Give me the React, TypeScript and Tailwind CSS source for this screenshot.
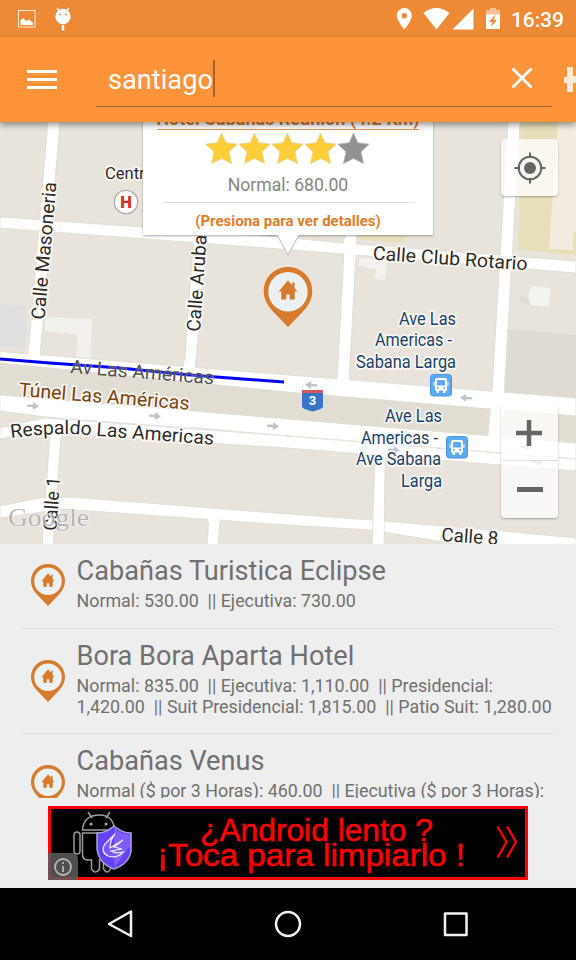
import React from "react";

function Pin({ className }: { className: string }) {
  return (
    <svg viewBox="0 0 34 42" className={className}>
      <path d="M17 0C7.500 0 0 7.500 0 16.800c0 6.200 3.300 11 7.200 15L17 42l9.800-10.200c3.900-4 7.200-8.800 7.200-15C34 7.500 26.500 0 17 0Z" fill="#d67a2c" />
      <circle cx="17" cy="17.300" r="13.800" fill="#ecf0f1" />
      <path d="M17 9.300 10.500 17.200h1.800v5.600h3.500v-3.600h2.400v3.600h3.500v-5.600h1.800L21.600 14.700v-3.900h-1.700v1.900Z" fill="#d67a2c" />
    </svg>
  );
}

type LabelProps = { x: number; y: number; w: number; a?: number; size?: number; fill?: string; children: string };

function Label({ x, y, w, a = 0, size = 19, fill = "#302a25", children }: LabelProps) {
  return (
    <text x={x} y={y} transform={`rotate(${a} ${x} ${y})`} fontSize={size} fill={fill} textLength={w}
      lengthAdjust="spacingAndGlyphs" stroke="#fff" strokeOpacity=".75" strokeWidth="3.500" strokeLinejoin="round" paintOrder="stroke">
      {children}
    </text>
  );
}

function Arrow({ x, y, left }: { x: number; y: number; left?: boolean }) {
  return (
    <path d="M-6-1.200H0V-4L6 0 0 4V1.200H-6Z" fill="#bdc3cb"
      transform={`translate(${x} ${y}) rotate(${left ? 184 : 4})`} />
  );
}

function Bus({ x, y }: { x: number; y: number }) {
  return (
    <g transform={`translate(${x} ${y})`}>
      <rect x=".5" y=".5" width="21" height="21.500" rx="3" fill="#5aabf3" stroke="#4795dc" />
      <path d="M7 4h8q2 0 2 2v10.500h-1.500V19H13v-2.500H9V19H6.500v-2.500H5V6q0-2 2-2Z" fill="#fff" />
      <path d="M7.300 6h7.400l.6 5.500H6.700Z" fill="#5aabf3" />
      <circle cx="7.800" cy="14" r="1" fill="#5aabf3" /><circle cx="14.200" cy="14" r="1" fill="#5aabf3" />
      <path d="M4 8v4M18 8v4" stroke="#fff" />
    </g>
  );
}

function StreetMap() {
  const navy = "#1d4166";
  return (
    <svg viewBox="0 122 576 422" className="block h-[422px] w-[576px]">
      <rect y="122" width="576" height="422" fill="#e8e4dc" />
      <path d="M0 304 27 305 25 348 0 346Z" fill="#dfdfe0" />
      <path d="M45 317 92 319 91 358 76 357 78 335 45 331Z" fill="#f2f1ed" />
      <path d="M521 122H576V255L518 250Z" fill="#e7deba" />
      <path d="M558 122H576V231L573 234V250L549 249Z" fill="#f2ede0" />
      <path d="M358 234H404V243L360 240Z" fill="#e7deba" />
      <path d="M359 258 387 260 385 280 375 279 376 269 359 266Z" fill="#f3f2ee" />
      <path d="M520 296 531 298 531 306 520 302Z" fill="#dfdbd4" />
      <path d="M531 286 551 288 549 307 530 305 528 296Z" fill="#f4f3f0" />
      <path d="M509 329 576 335V398L505 393Z" fill="#dfdad3" />
      <path d="M0 362 288 391 490 408 488 436 288 420 0 396Z" fill="#e2ddd3" />
      <path d="M503 409 576 415V443L500 437Z" fill="#e2ddd3" />
      <g stroke="#dcd8d0" strokeWidth=".7" fill="#fff">
        <path d="M48 122H60L40 356H28Z" />
        <path d="M194 236H207L195 370H184Z" />
        <path d="M345 234H357L349 382H337Z" />
        <path d="M508 122H520L504 395 500 440H488L492 391Z" />
        <path d="M0 217 280 237 343 243 576 261V273L343 254 280 249 0 228Z" />
        <path d="M0 351.500 288 375 576 398V416L490 409 288 392 0 363Z" />
        <path d="M0 395 288 419 576 443V460L288 436 46 417 0 411Z" />
        <path d="M0 428 30 421 46 418 288 436 576 459V471L288 448 62 434 28 433 0 439Z" />
        <path d="M50 434H61L53 546H42Z" />
        <path d="M0 506 40 498 70 497 288 514 371 520 490 530 576 538V548H480L371 530 288 525 62 509 0 518Z" />
        <path d="M209 517H220L218 546H207Z" />
        <path d="M375 459H385L384 546H372Z" />
      </g>
      <g fill="#fff">
        <path d="M29 345H40V359H28ZM184 361H195V374H184ZM338 373H349V386H337ZM493 386 504 387 501 440 488 440Z" />
        <path d="M46 218H51L50 231H43ZM344 239H356V255H344ZM501 251H512V266H501Z" />
        <path d="M51 424H61V438H50ZM46 495H56V512H45ZM209 509H220V522H208ZM375 452H385V463H375ZM374 518H384V533H373Z" />
      </g>
      <path d="M190 427 288 436 576 459" stroke="#e9e6de" strokeWidth="1" fill="none" />
      <Arrow x={33} y={406} /><Arrow x={155} y={416} /><Arrow x={273} y={426} />
      <Arrow x={311} y={385} left /><Arrow x={466} y={398} left />
      <Arrow x={394} y={450} /><Arrow x={526} y={447} /><Arrow x={537} y={462} />
      <g fontFamily="Roboto, sans-serif">
        <Label x={44.500} y={320} w={138} a={-85}>Calle Masoneria</Label>
        <Label x={200} y={332} w={97} a={-86}>Calle Aruba</Label>
        <Label x={372.500} y={259.500} w={155} a={4}>Calle Club Rotario</Label>
        <path d="M0 359 50 363 120 368 190 375 284 382" fill="none" stroke="#0000ff" strokeWidth="3" />
        <text x="70" y="373" transform="rotate(4.500 70 373)" fontSize="19" fill="#55524c" textLength="144" lengthAdjust="spacingAndGlyphs" stroke="#fff" strokeOpacity=".25" strokeWidth="2" paintOrder="stroke">Av Las Américas</text>
        <Label x={18.500} y={396} w={171} a={4.600} fill="#7c430c">Túnel Las Américas</Label>
        <path id="respaldo" d="M11 438Q42 434 72 434L216 445" fill="none" />
        <text fontSize="19" fill="#302a25" stroke="#fff" strokeOpacity=".75" strokeWidth="3.500" paintOrder="stroke"><textPath href="#respaldo" textLength="203" lengthAdjust="spacingAndGlyphs">Respaldo Las Americas</textPath></text>
        <Label x={56.500} y={531} w={54} a={-86}>Calle 1</Label>
        <Label x={441} y={541} w={57} a={4}>Calle 8</Label>
        <Label x={105} y={179} w={49} size={17}>Centro</Label>
        <Label x={399} y={324.500} w={57} size={17.500} fill={navy}>Ave Las</Label>
        <Label x={375} y={346} w={77} size={17.500} fill={navy}>Americas -</Label>
        <Label x={356} y={367.500} w={100} size={17.500} fill={navy}>Sabana Larga</Label>
        <Label x={385} y={422} w={57} size={17.500} fill={navy}>Ave Las</Label>
        <Label x={361} y={443.500} w={77} size={17.500} fill={navy}>Americas -</Label>
        <Label x={356} y={465} w={85} size={17.500} fill={navy}>Ave Sabana</Label>
        <Label x={401} y={486.500} w={41} size={17.500} fill={navy}>Larga</Label>
        <circle cx="126" cy="202" r="11.700" fill="#fff" stroke="#aaa" strokeWidth="1.300" />
        <text x="126" y="208" textAnchor="middle" fontSize="16.500" fontWeight="900" fill="#d93025">H</text>
        <path d="M302 397H323V407Q322 409 312.500 411.500 303 409 302 407Z" fill="#3674c6" />
        <path d="M302 390H323V393.500H302Z" fill="#d85656" />
        <path d="M302 393H323V399H302Z" fill="#3674c6" />
        <text x="312.500" y="405" textAnchor="middle" fontSize="13" fontWeight="700" fill="#fff">3</text>
      </g>
      <Bus x={430} y={374} /><Bus x={446} y={436} />
      <text x="8" y="525.500" fontFamily="'Liberation Serif', serif" fontSize="25" textLength="81" lengthAdjust="spacingAndGlyphs" fill="#8d8d8d" fillOpacity=".6" stroke="#fff" strokeOpacity=".6" strokeWidth="1.500" paintOrder="stroke">Google</text>
    </svg>
  );
}

function Star({ on }: { on: boolean }) {
  return (
    <svg viewBox="0 0 33 33" className="h-[33px] w-[33px]">
      <path d="M16.500 1 20.800 10.700 32.200 12.200 24 19.800 26.500 31.500 16.500 26.500 6.500 31.500 9 19.800 .8 12.200 12.200 10.700Z" fill={on ? "#ffcd37" : "#929292"} stroke={on ? "#e8d089" : "#b5b5b5"} strokeWidth=".8" />
    </svg>
  );
}

function InfoWindow() {
  return (
    <div className="absolute top-[-24px] left-[143px] h-[137px] w-[290px] bg-white shadow-[0_1px_2px_rgba(0,0,0,0.35)]">
      <div className="flex flex-col items-center pt-[10px]">
        <div className="flex h-[22px] w-[262px] justify-center border-b border-[#ed954e] text-[18px] leading-[22px] font-bold whitespace-nowrap text-[#d6782c]">Hotel Cabañas Reunión (4.2 Km)</div>
        <div className="mt-[2px] mr-[2px] flex h-[33px]">{[1, 1, 1, 1, 0].map((n, i) => <Star key={i} on={n === 1} />)}</div>
        <div className="mt-[9px] text-[17.600px] leading-[22px] text-[#858585]">Normal: 680.00</div>
        <div className="mt-[6px] h-px w-[251px] bg-[#dedede]" />
        <div className="mt-[8px] text-[15px] leading-[20px] font-bold whitespace-nowrap text-[#df7d2a]">(Presiona para ver detalles)</div>
      </div>
      <svg viewBox="0 0 24 22" className="absolute top-[136px] left-[133px] h-[22px] w-[24px]">
        <path d="M1 0 12 21 23 0Z" fill="#fff" /><path d="M1 1 12 21 23 1" fill="none" stroke="#bbb" />
      </svg>
    </div>
  );
}

function MapControls() {
  return (
    <>
      <div className="absolute top-[17px] left-[501px] flex h-[57px] w-[57px] items-center justify-center rounded-sm bg-white/75 shadow-[0_1px_2px_rgba(0,0,0,0.3)]">
        <svg viewBox="0 0 32 32" className="h-8 w-8" fill="none" stroke="#666" strokeWidth="2"><circle cx="16" cy="16" r="11.300" /><circle cx="16" cy="16" r="6" fill="#666" stroke="none" /><path d="M16 .5V6M16 26v5.500M.5 16H6M26 16h5.500" /></svg>
      </div>
      <div className="absolute top-[282px] left-[501px] flex h-[114px] w-[57px] flex-col rounded-sm bg-white/75 shadow-[0_1px_2px_rgba(0,0,0,0.3)]">
        <div className="flex h-[57px] items-center justify-center border-b border-[#deddda] pr-[2px] pt-[2px]"><svg viewBox="0 0 26 26" className="h-[26px] w-[26px]"><path d="M13 0V26M0 13H26" stroke="#666" strokeWidth="4.500" /></svg></div>
        <div className="flex h-[57px] items-center justify-center"><div className="h-[5px] w-[26px] bg-[#666]" /></div>
      </div>
    </>
  );
}

function StatusBar() {
  return (
    <div className="flex h-[37px] shrink-0 items-center bg-[#ee8a36]">
      <svg viewBox="0 0 80 37" className="h-[37px] w-[80px]">
        <rect x="18.500" y="10.500" width="16.500" height="16.500" fill="none" stroke="#fff" strokeOpacity=".85" />
        <path d="M20.500 25V20.500L23 18l3 3 3-1.500L33 23v2Z" fill="#fff" />
        <circle cx="63" cy="16.500" r="7.700" fill="#fff" />
        <path d="m57 8 3 4M69 8l-3 4" stroke="#fff" strokeWidth="1.300" />
        <path d="M63 25v5.500" stroke="#fff" strokeWidth="2.500" />
        <circle cx="60" cy="14.500" r="1" fill="#ee8a36" /><circle cx="66" cy="14.500" r="1" fill="#ee8a36" />
      </svg>
      <svg viewBox="390 0 112 37" className="ml-[310px] h-[37px] w-[112px]">
        <path d="M404.300 8a7.500 7.500 0 0 0-7.500 7.500c0 5.500 7.500 14 7.500 14s7.500-8.500 7.500-14a7.500 7.500 0 0 0-7.500-7.500Zm0 5a2.700 2.700 0 1 1 0 5.400 2.700 2.700 0 0 1 0-5.400Z" fill="#fff" />
        <path d="M423.500 13Q436.500 3 449.500 13L436.500 29.500Z" fill="#fff" />
        <path d="M473.500 8.500V29.500H452.500Z" fill="#fff" />
        <path d="M490 8h6v2h4v5h-14v-5h4Z" fill="#f7c095" /><path d="M486 14.500h14V29h-14Z" fill="#fff" />
        <path d="m495 15-6 7h3.500l-1.500 5 6-7h-3.500l2-5Z" fill="#ee8a36" />
      </svg>
      <span className="ml-[9px] pt-[3px] text-[21px] leading-none font-medium tracking-[-0.100px] text-white">16:39</span>
    </div>
  );
}

function SearchBar() {
  return (
    <header className="relative z-10 flex h-[85px] shrink-0 bg-[#ff933a] shadow-[0_3px_6px_rgba(0,0,0,0.4)]">
      <div className="flex w-[96px] flex-col gap-[5px] pt-[33px] pl-[27px]">
        <i className="h-[3px] w-[30px] bg-white" /><i className="h-[3px] w-[30px] bg-white" /><i className="h-[3px] w-[30px] bg-white" />
      </div>
      <div className="flex h-[70px] w-[456px] items-center border-b border-[#a56737] pt-[13px] pl-[12px]">
        <span className="pt-[4px] text-[27.200px] leading-8 text-white">santiago</span>
        <i className="h-[37px] w-[2px] bg-[#a7622b]" />
        <svg viewBox="0 0 22 22" className="mr-[19px] ml-auto h-[22px] w-[22px]"><path d="m1.500 1.500 19 19m0-19-19 19" stroke="#fff" strokeWidth="2.800" /></svg>
      </div>
      <svg viewBox="0 0 12 85" className="ml-[12px] h-[85px] w-[12px]"><path d="M3 30H9V39H12V46H9V55H3V46H0V40H3Z" fill="#ffe9d8" /></svg>
    </header>
  );
}

const places = [
  { name: "Cabañas Turistica Eclipse", lines: ["Normal: 530.00  || Ejecutiva: 730.00"], pt: "pt-[20px]", h: "h-[85px]" },
  { name: "Bora Bora Aparta Hotel", lines: ["Normal: 835.00  || Ejecutiva: 1,110.00  || Presidencial:", "1,420.00  || Suit Presidencial: 1,815.00  || Patio Suit: 1,280.00"], pt: "pt-[31px]", h: "h-[105px]" },
  { name: "Cabañas Venus", lines: ["Normal ($ por 3 Horas): 460.00  || Ejecutiva ($ por 3 Horas):"], pt: "pt-[31px]", h: "h-[105px]" },
];

function PlaceList() {
  return (
    <main className="flex h-[254px] shrink-0 flex-col overflow-hidden pr-[22px] pl-[23px] text-[#707070]">
      {places.map((p) => (
        <div key={p.name} className={`flex shrink-0 border-b border-[#dcdcdc] pl-[8px] ${p.h}`}>
          <div className={p.pt}><Pin className="h-[42px] w-[34px]" /></div>
          <div className="pt-[10px] pl-[11.500px] whitespace-pre">
            <div className="text-[27.150px] leading-[34px]">{p.name}</div>
            <div className="mt-[2px] text-[17.850px] leading-[21px]">{p.lines.map((l) => <div key={l}>{l}</div>)}</div>
          </div>
        </div>
      ))}
    </main>
  );
}

function AdBanner() {
  return (
    <div className="flex h-[90px] shrink-0 justify-center pt-[8px]">
      <div className="relative flex h-[74px] w-[480px] border-[3px] border-[#f00] bg-black">
        <svg viewBox="51 809 105 68" className="h-[68px] w-[105px]">
          <g fill="none" stroke="#9c9c9c" strokeWidth="1.500">
            <path d="M82.500 830q1-15 17-15 14 0 15 15Z" /><path d="m92 818-4-6M106 818l4-6" />
            <path d="M82.500 833h32v23q0 4-4 4v9q-3 6-7 0v-9h-4v9q-4 6-8 0v-9h-4q-5 0-5-6Z" />
            <rect x="74" y="832" width="6" height="22" rx="3" />
          </g>
          <circle cx="91" cy="824" r="1.500" fill="#aaa" /><circle cx="106" cy="824" r="1.500" fill="#aaa" />
          <path d="M114 826q8 7 17 7v18q-2 13-17 18-15-5-17-20v-16q9 0 17-7Z" fill="#6341f4" stroke="#a9a6d0" strokeWidth="1.500" />
          <path d="M114 828q8 7 16 7v11l-16 22Z" fill="#805bff" />
          <path d="m115 834-10 10q-5 8 3 12 9 3 15-4-7 2-12-1l11-2-8-2 9-7-13 8q0-8 5-14Z" fill="#7559ff" stroke="#eee" strokeWidth="1.200" />
        </svg>
        <svg viewBox="156 809 320 68" className="h-[68px] w-[320px]" fontFamily="'Liberation Sans', Arial, sans-serif" fontSize="31" fill="#f00" stroke="#f00" strokeWidth=".5">
          <text x="200" y="840.500" textLength="233" lengthAdjust="spacingAndGlyphs">¿Android lento ?</text>
          <text x="157" y="866" textLength="308" lengthAdjust="spacingAndGlyphs">¡Toca para limpiarlo !</text>
        </svg>
        <svg viewBox="0 0 22 34" className="absolute top-[16px] left-[445px] h-[34px] w-[22px]" fill="none" stroke="#f00" strokeWidth="2.300"><path d="m1.500 1.500 9 15.500-9 15.500M11 1.500l9 15.500-9 15.500" /></svg>
        <div className="absolute bottom-[-3px] left-[-3px] flex h-[27px] w-[30px] items-center justify-center rounded-tr-md bg-[#5d5d5d]/85">
          <svg viewBox="0 0 20 20" className="h-5 w-5" fill="none" stroke="#b5b5b5" strokeWidth="1.800"><circle cx="10" cy="10" r="8" /><path d="M10 9v6M10 5v2" /></svg>
        </div>
      </div>
    </div>
  );
}

export default function App() {
  return (
    <div className="flex h-[960px] w-[576px] flex-col overflow-hidden bg-[#eee] [font-family:Roboto,sans-serif]">
      <StatusBar />
      <SearchBar />
      <section className="relative h-[422px] shrink-0 overflow-hidden">
        <StreetMap />
        <InfoWindow />
        <Pin className="absolute top-[145px] left-[263px] h-[60px] w-[50px]" />
        <MapControls />
      </section>
      <PlaceList />
      <AdBanner />
      <nav className="h-[72px] shrink-0 bg-black">
        <svg viewBox="0 888 576 72" className="h-[72px] w-[576px]" fill="none" stroke="#f2f2f2" strokeWidth="2.500" strokeLinejoin="round">
          <path d="M131 911.500V936L109 924Z" /><circle cx="288" cy="924" r="12" /><rect x="445" y="913.500" width="21.500" height="21.500" />
        </svg>
      </nav>
    </div>
  );
}
